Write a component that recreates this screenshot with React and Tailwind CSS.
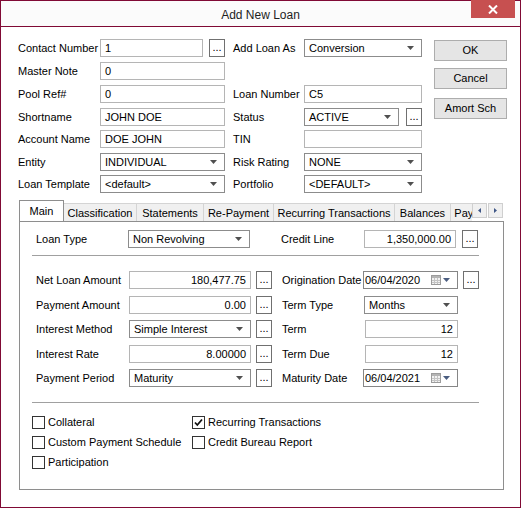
import React from 'react';

const Arrow = ({ color = '#505050' }) => (
  <svg width="7" height="4" viewBox="0 0 7 4" className="shrink-0">
    <path d="M0 0H7L3.5 4Z" fill={color} />
  </svg>
);

const TextBox = ({ value = '', className = '', right = false }) => (
  <div
    className={`h-[18px] shrink-0 border border-[#b5b5b5] bg-white flex items-center px-[4px] leading-none whitespace-nowrap overflow-hidden ${right ? 'justify-end' : ''} ${className}`}
  >
    {value}
  </div>
);

const Select = ({ value, className = '' }) => (
  <div
    className={`h-[18px] shrink-0 border border-[#8c8c8c] bg-white flex items-center justify-between pl-[4px] pr-[7px] leading-none whitespace-nowrap ${className}`}
  >
    <span>{value}</span>
    <Arrow />
  </div>
);

const Dots = ({ className = '' }) => (
  <div
    className={`w-[16px] h-[18px] shrink-0 border border-[#707070] bg-white flex items-end justify-center pb-[3px] leading-none ${className}`}
  >
    ...
  </div>
);

const Calendar = () => (
  <svg width="10" height="10" viewBox="0 0 10 10" className="shrink-0">
    <rect x="0.5" y="0.5" width="9" height="9" fill="#f2f2f2" stroke="#9c9c9c" />
    <rect x="1" y="1" width="8" height="2" fill="#b4b4b4" />
    <path d="M1 5.5H9M1 7.5H9M3.5 3V9M6.5 3V9" stroke="#c4c4c4" strokeWidth="1" />
  </svg>
);

const DateBox = ({ value }) => (
  <div className="w-[95px] h-[18px] shrink-0 border border-[#868686] bg-white flex items-center pl-[1px] pr-[7px] leading-none">
    <span className="flex-1">{value}</span>
    <Calendar />
    <span className="ml-[2px]">
      <Arrow color="#4b5d80" />
    </span>
  </div>
);

const Check = ({ label, checked = false }) => (
  <div className="flex items-center gap-[3px] h-[13px] leading-none whitespace-nowrap">
    <div className="w-[13px] h-[13px] shrink-0 border border-[#333333] bg-white flex items-center justify-center">
      {checked && (
        <svg width="9" height="9" viewBox="0 0 9 9">
          <path d="M1 4.5L3.3 7L8 1.5" fill="none" stroke="#111" strokeWidth="1.8" />
        </svg>
      )}
    </div>
    <span>{label}</span>
  </div>
);

const Btn = ({ children, className = '' }) => (
  <div
    className={`w-[73px] h-[21px] border border-[#adadad] bg-[#e5e5e5] flex items-center justify-center leading-none ${className}`}
  >
    {children}
  </div>
);

const topRows = [
  {
    mt: 'mt-0',
    left: 'Contact Number',
    leftCtl: (
      <>
        <TextBox value="1" className="w-[103px]" />
        <Dots className="ml-[6px]" />
      </>
    ),
    right: 'Add Loan As',
    rightCtl: <Select value="Conversion" className="w-[118px]" />,
  },
  {
    mt: 'mt-[5px]',
    left: 'Master Note',
    leftCtl: <TextBox value="0" className="w-[125px]" />,
    right: '',
    rightCtl: null,
  },
  {
    mt: 'mt-[5px]',
    left: 'Pool Ref#',
    leftCtl: <TextBox value="0" className="w-[125px]" />,
    right: 'Loan Number',
    rightCtl: <TextBox value="C5" className="w-[118px]" />,
  },
  {
    mt: 'mt-[5px]',
    left: 'Shortname',
    leftCtl: <TextBox value="JOHN DOE" className="w-[125px]" />,
    right: 'Status',
    rightCtl: (
      <>
        <Select value="ACTIVE" className="w-[95px]" />
        <Dots className="ml-[7px]" />
      </>
    ),
  },
  {
    mt: 'mt-[4px]',
    left: 'Account Name',
    leftCtl: <TextBox value="DOE JOHN" className="w-[125px]" />,
    right: 'TIN',
    rightCtl: <TextBox value="" className="w-[118px]" />,
  },
  {
    mt: 'mt-[5px]',
    left: 'Entity',
    leftCtl: <Select value="INDIVIDUAL" className="w-[125px]" />,
    right: 'Risk Rating',
    rightCtl: <Select value="NONE" className="w-[118px]" />,
  },
  {
    mt: 'mt-[4px]',
    left: 'Loan Template',
    leftCtl: <Select value="<default>" className="w-[125px]" />,
    right: 'Portfolio',
    rightCtl: <Select value="<DEFAULT>" className="w-[118px]" />,
  },
];

const tabs = [
  { name: 'Classification', w: 'w-[73px]' },
  { name: 'Statements', w: 'w-[67px]' },
  { name: 'Re-Payment', w: 'w-[70px]' },
  { name: 'Recurring Transactions', w: 'w-[121px]' },
  { name: 'Balances', w: 'w-[56px]' },
  { name: 'Payment Schedule', w: 'w-[100px]' },
];

const mainRows = [
  {
    mt: 'mt-[15px]',
    left: 'Net Loan Amount',
    leftCtl: <TextBox value="180,477.75" right className="w-[122px]" />,
    leftDots: true,
    right: 'Origination Date',
    rightCtl: <DateBox value="06/04/2020" />,
    rightDots: true,
  },
  {
    mt: 'mt-[7px]',
    left: 'Payment Amount',
    leftCtl: <TextBox value="0.00" right className="w-[122px]" />,
    leftDots: true,
    right: 'Term Type',
    rightCtl: <Select value="Months" className="w-[94px] ml-[1px]" />,
  },
  {
    mt: 'mt-[6px]',
    left: 'Interest Method',
    leftCtl: <Select value="Simple Interest" className="w-[122px]" />,
    leftDots: true,
    right: 'Term',
    rightCtl: <TextBox value="12" right className="w-[93px] ml-[2px]" />,
  },
  {
    mt: 'mt-[7px]',
    left: 'Interest Rate',
    leftCtl: <TextBox value="8.00000" right className="w-[122px]" />,
    leftDots: true,
    right: 'Term Due',
    rightCtl: <TextBox value="12" right className="w-[93px] ml-[2px]" />,
  },
  {
    mt: 'mt-[6px]',
    left: 'Payment Period',
    leftCtl: <Select value="Maturity" className="w-[122px]" />,
    leftDots: true,
    right: 'Maturity Date',
    rightCtl: <DateBox value="06/04/2021" />,
  },
];

export default function App() {
  return (
    <div className="w-[521px] h-[508px] bg-white border border-[#800a35] flex flex-col font-['Liberation_Sans',Arial,sans-serif] text-[11px] text-black select-none">
      {/* title bar */}
      <div className="relative h-[26px] shrink-0 border-b border-[#800a35] bg-[#fbfbfb] flex items-center justify-center">
        <span className="text-[12px] text-[#1e1e1e] mt-[3px] font-['Liberation_Sans',Arial,sans-serif]">Add New Loan</span>
        <div className="absolute top-[-1px] right-[5px] w-[44px] h-[18px] bg-[#c75050] flex items-center justify-center">
          <svg width="10" height="9" viewBox="0 0 10 9">
            <path d="M1 0.5L9 8.5M9 0.5L1 8.5" stroke="#fff" strokeWidth="2" />
          </svg>
        </div>
      </div>

      <div className="flex flex-col pl-[17px] pt-[12px]">
        {/* header fields */}
        <div className="flex">
          <div className="flex flex-col">
            {topRows.map((r) => (
              <div key={r.left} className={`flex items-center h-[18px] ${r.mt}`}>
                <div className="w-[82px] shrink-0 leading-none whitespace-nowrap">{r.left}</div>
                <div className="w-[125px] shrink-0 flex items-center">{r.leftCtl}</div>
                <div className="w-[71px] ml-[8px] shrink-0 leading-none whitespace-nowrap">{r.right}</div>
                <div className="w-[118px] shrink-0 flex items-center">{r.rightCtl}</div>
              </div>
            ))}
          </div>
          <div className="flex flex-col ml-[12px] mt-[1px]">
            <Btn>OK</Btn>
            <Btn className="mt-[7px]">Cancel</Btn>
            <Btn className="mt-[9px]">Amort Sch</Btn>
          </div>
        </div>

        {/* tabs */}
        <div className="mt-[7px] ml-[1px] flex h-[21px] w-[485px]">
          <div className="flex items-end w-[453px] overflow-hidden">
            <div className="relative z-10 w-[45px] h-[22px] mb-[-1px] shrink-0 bg-white border border-b-0 border-[#8e8e8e] flex items-start justify-center pt-[5px] leading-none">
              Main
            </div>
            {tabs.map((t) => (
              <div
                key={t.name}
                className={`${t.w} h-[18px] shrink-0 bg-[#f0f0f0] border-t border-r border-[#d4d4d4] flex items-center justify-center leading-none whitespace-nowrap pt-[1px]`}
              >
                {t.name}
              </div>
            ))}
          </div>
          <div className="flex mt-[3px] h-[15px]">
            <div className="w-[15px] h-[15px] border border-[#cfcfcf] bg-[#f0f0f0] flex items-center justify-center">
              <svg width="3" height="5" viewBox="0 0 3 5">
                <path d="M3 0V5L0 2.5Z" fill="#3f5787" />
              </svg>
            </div>
            <div className="w-[15px] h-[15px] ml-[1px] border border-[#cfcfcf] bg-[#f0f0f0] flex items-center justify-center">
              <svg width="3" height="5" viewBox="0 0 3 5">
                <path d="M0 0V5L3 2.5Z" fill="#3f5787" />
              </svg>
            </div>
          </div>
        </div>

        {/* tab panel */}
        <div className="ml-[1px] w-[485px] h-[269px] border border-[#8e8e8e] bg-white flex flex-col pt-[8px]">
          <div className="flex items-center h-[18px] pl-[16px]">
            <div className="w-[92px] shrink-0 leading-none">Loan Type</div>
            <Select value="Non Revolving" className="w-[122px]" />
            <div className="w-[83px] ml-[31px] shrink-0 leading-none">Credit Line</div>
            <TextBox value="1,350,000.00" right className="w-[92px]" />
            <Dots className="ml-[6px]" />
          </div>

          <div className="mt-[7px] ml-[12px] w-[447px] h-px bg-[#a0a0a0]" />

          {mainRows.map((r) => (
            <div key={r.left} className={`flex items-center h-[18px] pl-[16px] ${r.mt}`}>
              <div className="w-[93px] shrink-0 leading-none whitespace-nowrap">{r.left}</div>
              {r.leftCtl}
              {r.leftDots && <Dots className="ml-[5px]" />}
              <div className="w-[81px] ml-[10px] shrink-0 leading-none whitespace-nowrap">{r.right}</div>
              <div className="w-[95px] shrink-0 flex items-center">{r.rightCtl}</div>
              {r.rightDots && <Dots className="ml-[5px]" />}
            </div>
          ))}

          <div className="mt-[15px] ml-[12px] w-[447px] h-px bg-[#a0a0a0]" />

          <div className="mt-[13px] ml-[12px] grid grid-cols-[160px_200px] gap-y-[7px]">
            <Check label="Collateral" />
            <Check label="Recurring Transactions" checked />
            <Check label="Custom Payment Schedule" />
            <Check label="Credit Bureau Report" />
            <Check label="Participation" />
          </div>
        </div>
      </div>
    </div>
  );
}
